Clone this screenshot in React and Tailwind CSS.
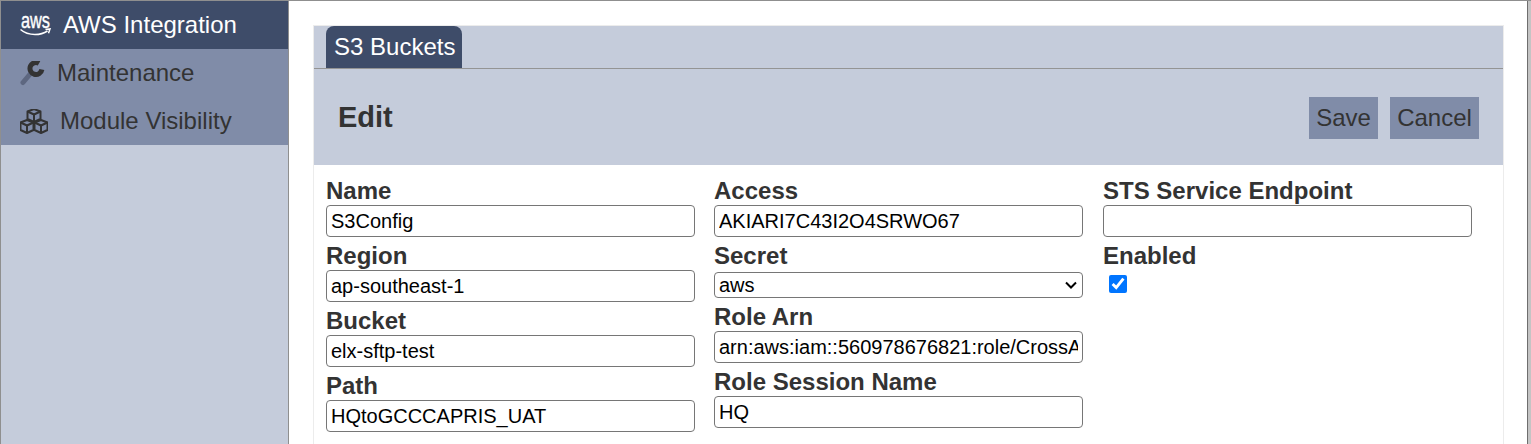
const labelClass = "mb-[2px] block text-[24px] leading-[25px] font-bold text-[#333333]";
const inputClass = "block h-[32px] w-full rounded-[4px] border border-[#767676] bg-white px-[4px] text-[20px] text-black outline-none";

function AwsIcon() {
  return (
    <svg width="32" height="34" viewBox="0 -7 32 34" className="shrink-0">
      <text transform="translate(1 13) scale(1 1.400)" fontSize="16" fontFamily="Liberation Sans, sans-serif" textLength="29" lengthAdjust="spacingAndGlyphs" fill="#ffffff" stroke="#ffffff" strokeWidth="0.300">aws</text>
      <path d="M0.500 14.500c4 3.500 9 5 14.500 5 4.500 0 9-1.200 12.500-3.500" fill="none" stroke="#ffffff" strokeWidth="1.500" />
      <path d="M25.500 14.500l4.500-.5-1.500 4.200" fill="none" stroke="#ffffff" strokeWidth="1.500" />
    </svg>
  );
}

function WrenchIcon() {
  return (
    <svg width="25" height="25" viewBox="0 0 25 25" className="shrink-0">
      <path d="M11 12 3 21.500" fill="none" stroke="#5d6780" strokeWidth="5" strokeLinecap="round" />
      <path d="M21.900 8.500A6 6 0 1 1 19 2.300" fill="none" stroke="#333333" strokeWidth="5" />
    </svg>
  );
}

function CubesIcon() {
  const cube = (x, y) => (
    <g transform={`translate(${x} ${y})`} fill="none" stroke="#333333" strokeWidth="2" strokeLinejoin="round">
      <path d="M7 0 13.500 2.500V10L7 13 .5 10V2.500z" />
      <path d="M.5 2.500 7 5.500 13.500 2.500M7 5.500V13" />
    </g>
  );
  return (
    <svg width="28" height="25" viewBox="0 0 28 25" className="shrink-0">
      {cube(7, 0)}
      {cube(0, 11)}
      {cube(14, 11)}
    </svg>
  );
}

function Field({ label, value }) {
  return (
    <div>
      <label className={labelClass}>{label}</label>
      <input className={inputClass} defaultValue={value} />
    </div>
  );
}

export default function App() {
  return (
    <div className="flex h-[444px] overflow-hidden border-t border-l border-[#8f8f8f] bg-white font-['Liberation_Sans',Arial,sans-serif]">
      <aside className="w-[288px] shrink-0 border-r border-[#8f8f8f] bg-[#c5ccdb]">
        <div className="flex h-[48px] items-center gap-[11px] bg-[#3e4c69] pl-[19px] text-[24px] text-white">
          <AwsIcon />
          <span>AWS Integration</span>
        </div>
        <div className="flex h-[48px] items-center gap-[12px] bg-[#808ca8] pl-[19px] text-[24px] text-[#333333]">
          <WrenchIcon />
          <span>Maintenance</span>
        </div>
        <div className="flex h-[48px] items-center gap-[12px] bg-[#808ca8] pl-[19px] text-[24px] text-[#333333]">
          <CubesIcon />
          <span>Module Visibility</span>
        </div>
      </aside>
      <main className="flex-1 pt-[24px] pl-[24px]">
        <div className="h-[440px] w-[1191px] border border-[#ececec]">
          <div className="bg-[#c5ccdb]">
            <div className="flex h-[43px] items-end border-b border-[#949494] pl-[12px]">
              <div className="flex h-[42px] w-[136px] items-center rounded-t-[8px] bg-[#3e4c69] px-[8px] text-[24px] whitespace-nowrap text-white">
                S3 Buckets
              </div>
            </div>
            <div className="flex h-[96px] items-center justify-between pt-[2px] pr-[24px] pl-[24px]">
              <h1 className="text-[29px] font-bold text-[#333333]">Edit</h1>
              <div className="flex gap-[12px]">
                <button className="h-[42px] w-[69px] bg-[#808ca8] text-[24px] text-[#333333]">Save</button>
                <button className="h-[42px] w-[89px] bg-[#808ca8] text-[24px] text-[#333333]">Cancel</button>
              </div>
            </div>
          </div>
          <div className="grid grid-cols-[369px_370px_369px] gap-x-[19px] pt-[13px] pl-[12px]">
            <div className="flex flex-col gap-[6px]">
              <Field label="Name" value="S3Config" />
              <Field label="Region" value="ap-southeast-1" />
              <Field label="Bucket" value="elx-sftp-test" />
              <Field label="Path" value="HQtoGCCCAPRIS_UAT" />
            </div>
            <div className="flex flex-col gap-[6px] pr-[1px]">
              <Field label="Access" value="AKIARI7C43I2O4SRWO67" />
              <div>
                <label className={labelClass}>Secret</label>
                <div className="relative mt-[4px]">
                  <select className="block h-[26px] w-full appearance-none rounded-[4px] border border-[#767676] bg-white pb-[1px] pl-[4px] text-[20px] leading-[22px] text-black outline-none" defaultValue="aws">
                    <option value="aws">aws</option>
                  </select>
                  <svg width="12" height="8" viewBox="0 0 12 8" className="pointer-events-none absolute top-[9px] right-[6px]">
                    <path d="M1 1.500 6 6.500 11 1.500" fill="none" stroke="#000000" strokeWidth="2" />
                  </svg>
                </div>
              </div>
              <Field label="Role Arn" value="arn:aws:iam::560978676821:role/CrossAccountRole" />
              <Field label="Role Session Name" value="HQ" />
            </div>
            <div className="flex flex-col gap-[6px]">
              <Field label="STS Service Endpoint" value="" />
              <div>
                <label className={labelClass}>Enabled</label>
                <input type="checkbox" defaultChecked className="mt-[7px] ml-[6px] block h-[18px] w-[18px] accent-[#0075ff]" />
              </div>
            </div>
          </div>
        </div>
      </main>
      <div className="w-[4px] shrink-0 border-l border-[#6e6e6e] bg-[#c4c4c4]"></div>
    </div>
  );
}
